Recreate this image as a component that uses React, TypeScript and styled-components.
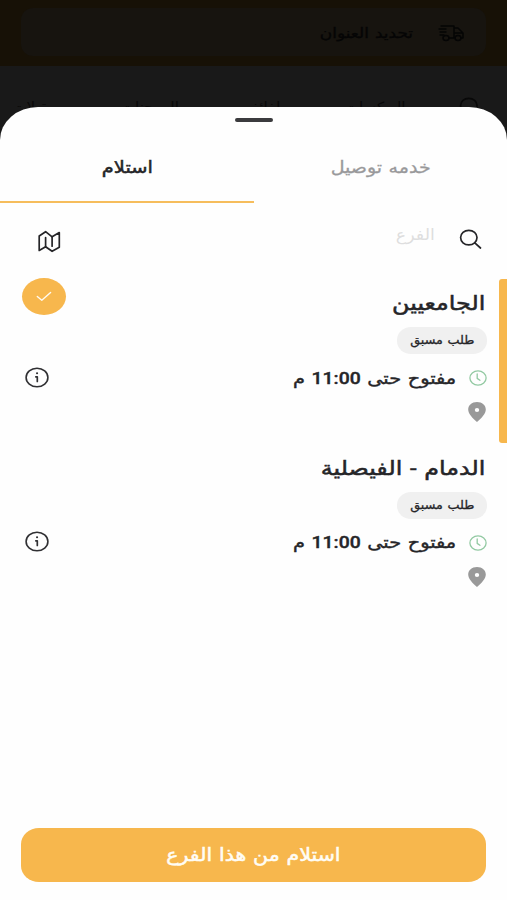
import React from "react";
import styled, { createGlobalStyle } from "styled-components";

const GlobalStyle = createGlobalStyle`
  * { box-sizing: border-box; }
  body { margin: 0; background: #191919; }
`;

const Page = styled.main`
  width: 507px;
  height: 900px;
  display: flex;
  flex-direction: column;
  direction: rtl;
  overflow: hidden;
  background: #191919;
  color: #252528;
  font-family: Roboto, "DejaVu Sans", sans-serif;
`;

const Label = styled.span<{
  $size: number;
  $stretch?: number;
  $origin?: string;
  $weight?: number;
  $stroke?: number;
  $color?: string;
}>`
  display: inline-block;
  white-space: nowrap;
  line-height: 1.2;
  font-size: ${(p) => p.$size}px;
  font-weight: ${(p) => p.$weight ?? 400};
  color: ${(p) => p.$color ?? "inherit"};
  word-spacing: 1.5px;
  -webkit-text-stroke: ${(p) => p.$stroke ?? 0}px currentColor;
  transform: scaleX(${(p) => p.$stretch ?? 1});
  transform-origin: ${(p) => p.$origin ?? "right"} center;
`;

const Header = styled.header`
  flex: none;
  height: 66px;
  padding: 8px 21px 10px;
  background: #171106;
`;

const AddressBar = styled.div`
  height: 48px;
  padding: 2px 21px 0;
  display: flex;
  align-items: center;
  gap: 25px;
  border-radius: 12px;
  background: #17140f;
  color: #050505;
`;

const Categories = styled.nav`
  flex: none;
  height: 41px;
  padding: 31px 25px 0 14px;
  display: flex;
  align-items: flex-start;
  justify-content: space-between;
  overflow: hidden;
  color: #080808;
`;

const CategoryList = styled.div`
  width: 389px;
  padding-top: 2px;
  display: flex;
  justify-content: space-between;
`;

const Sheet = styled.section`
  flex: none;
  height: 793px;
  display: flex;
  flex-direction: column;
  border-radius: 38px 38px 0 0 / 33px 33px 0 0;
  background: #fefefe;
`;

const Handle = styled.div`
  flex: none;
  width: 38px;
  height: 4px;
  margin: 11px auto 0;
  border-radius: 2px;
  background: #3b3b3e;
`;

const Tabs = styled.div`
  flex: none;
  height: 81px;
  display: grid;
  grid-template-columns: 253px 254px;
`;

const Tab = styled.button<{ $active?: boolean }>`
  display: flex;
  align-items: flex-start;
  justify-content: center;
  padding: 35px 0 0;
  border: 0;
  border-bottom: 2px solid ${(p) => (p.$active ? "#f6bd5c" : "transparent")};
  background: none;
  font-family: inherit;
  color: ${(p) => (p.$active ? "#252528" : "#99999b")};
`;

const SearchRow = styled.div`
  flex: none;
  height: 76px;
  padding: 26px 25px 0 37px;
  display: flex;
  align-items: flex-start;
`;

const SearchText = styled.div`
  flex: 1;
  padding-right: 24px;
  margin-top: -4px;
`;

const Branches = styled.div`
  flex: 1;
  display: flex;
  align-items: flex-start;
`;

const ScrollThumb = styled.div`
  width: 8px;
  height: 164px;
  border-radius: 3px 0 0 3px;
  background: #f7b74d;
`;

const BranchList = styled.div`
  flex: 1;
`;

const Branch = styled.article`
  height: 164.5px;
  padding: 0 12px 0 22px;
  display: flex;
  justify-content: space-between;
`;

const Info = styled.div`
  display: flex;
  flex-direction: column;
  align-items: flex-start;
`;

const TitleBox = styled.div`
  height: 48px;
  padding: 12px 2px 0 0;
`;

const Tag = styled.div`
  width: 90px;
  height: 27px;
  display: flex;
  align-items: center;
  justify-content: center;
  border-radius: 14px / 13px;
  background: #f0f0f0;
`;

const Hours = styled.div`
  height: 48px;
  display: flex;
  align-items: center;
  gap: 13px;
`;

const Actions = styled.div`
  width: 44px;
  display: flex;
  flex-direction: column;
`;

const Selected = styled.div<{ $on: boolean }>`
  height: 37px;
  margin-top: -1px;
  display: grid;
  place-items: center;
  border-radius: 50%;
  background: ${(p) => (p.$on ? "#f7b74d" : "transparent")};
`;

const InfoButton = styled.button`
  align-self: flex-end;
  display: grid;
  place-items: center;
  width: 30px;
  height: 24px;
  margin-top: 50px;
  padding: 0;
  border: 0;
  background: none;
  color: #303033;
`;

const Confirm = styled.button`
  flex: none;
  height: 54px;
  margin: 0 21px 18px;
  display: flex;
  align-items: center;
  justify-content: center;
  border: 0;
  border-radius: 18px / 16px;
  background: #f7b74d;
  color: #fffdf5;
  font-family: inherit;
`;

const Svg = styled.svg<{ $stroke?: string }>`
  display: block;
  flex: none;
  fill: none;
  stroke: ${(p) => p.$stroke ?? "currentColor"};
  stroke-linecap: round;
  stroke-linejoin: round;
`;

const SearchIcon = () => (
  <Svg width="23" height="21" viewBox="0 0 23 21" strokeWidth="1.7">
    <ellipse cx="9.8" cy="8.6" rx="8.2" ry="7.3" />
    <path d="M15.8 13.8 21.5 19" />
  </Svg>
);

const MapIcon = () => (
  <Svg width="24" height="24" viewBox="0 -1 24 24" strokeWidth="1.7">
    <path d="M2.2 6v14.4l6.4-3.6 6.5 4.5 7.2-4V2.5l-7.2 4.300L8.600 1.700Z" />
    <path d="M8.600 7.500v9.300M15.100 6.800v9.400" />
  </Svg>
);

const TruckIcon = () => (
  <Svg width="27" height="18" viewBox="0 0 27 18" strokeWidth="1.5">
    <path d="M3 2h13v12H11M16 4h4l5 5v5h-2M16 9h9M1 5h7M2 8h6M2 11h4" />
    <ellipse cx="8" cy="14" rx="3" ry="2.5" />
    <ellipse cx="20" cy="14" rx="3" ry="2.5" />
  </Svg>
);

const CheckIcon = () => (
  <Svg width="16" height="11" viewBox="0 0 16 11" $stroke="#fffaf0" strokeWidth="1.4">
    <path d="m1.3 5.5 4.500 3.800 8.800-7.800" />
  </Svg>
);

const ClockIcon = () => (
  <Svg width="18" height="16" viewBox="0 0 18 16" $stroke="#92c9a2" strokeWidth="1.3">
    <ellipse cx="9" cy="8" rx="8.1" ry="7.1" />
    <path d="M8.200 4v4.400l2.700 1.900" />
  </Svg>
);

const PinShape = styled.path`
  fill: #999;
  fill-rule: evenodd;
`;

const PinIcon = () => (
  <Svg width="19" height="20" viewBox="0 0 19 20" $stroke="none">
    <PinShape d="M9 0C3.800 0 .2 3.300.2 7.600.2 11.800 4.400 16.200 9 20c4.600-3.800 8.800-8.200 8.800-12.400C17.800 3.300 14.200 0 9 0Zm0 6a2.200 2 0 1 1 0 4 2.200 2 0 0 1 0-4Z" />
  </Svg>
);

const InfoIcon = () => (
  <Svg width="24" height="21" viewBox="0 0 24 21" strokeWidth="1.6">
    <ellipse cx="12" cy="10.500" rx="10.900" ry="9.300" />
    <path d="M10.800 9.800h1.500v4.700" strokeWidth="1.7" />
    <path d="M12 6.200h.1" strokeWidth="2" />
  </Svg>
);

const branches = [
  { name: "الجامعيين", selected: true },
  { name: "الدمام - الفيصلية", selected: false },
];

const categories = ["البوكسات", "لفائف", "المعجنات", "مقبلات"];

export default function App() {
  return (
    <Page>
      <GlobalStyle />
      <Header>
        <AddressBar>
          <TruckIcon />
          <Label $size={14} $stretch={1.21} $stroke={0.3}>تحديد العنوان</Label>
        </AddressBar>
      </Header>
      <Categories>
        <SearchIcon />
        <CategoryList>
          {categories.map((name) => (
            <Label key={name} $size={14} $stretch={1.08} $origin="center">{name}</Label>
          ))}
        </CategoryList>
      </Categories>
      <Sheet>
        <Handle />
        <Tabs>
          <Tab>
            <Label $size={17} $stretch={1.12} $origin="center" $stroke={0.3}>خدمه توصيل</Label>
          </Tab>
          <Tab $active>
            <Label $size={17} $stretch={1.14} $origin="center" $stroke={0.5}>استلام</Label>
          </Tab>
        </Tabs>
        <SearchRow>
          <SearchIcon />
          <SearchText>
            <Label $size={16} $stretch={1.09} $color="#dededf">الفرع</Label>
          </SearchText>
          <MapIcon />
        </SearchRow>
        <Branches>
          <ScrollThumb />
          <BranchList>
            {branches.map((branch) => (
              <Branch key={branch.name}>
                <Info>
                  <TitleBox>
                    <Label $size={20} $stretch={1.19} $stroke={0.5}>{branch.name}</Label>
                  </TitleBox>
                  <Tag>
                    <Label $size={12} $stretch={1.06} $origin="center" $stroke={0.3}>طلب مسبق</Label>
                  </Tag>
                  <Hours>
                    <ClockIcon />
                    <Label $size={17} $stretch={1.14} $weight={500} $stroke={0.4}>مفتوح حتى 11:00 م</Label>
                  </Hours>
                  <PinIcon />
                </Info>
                <Actions>
                  <Selected $on={branch.selected}>
                    {branch.selected && <CheckIcon />}
                  </Selected>
                  <InfoButton aria-label="معلومات الفرع">
                    <InfoIcon />
                  </InfoButton>
                </Actions>
              </Branch>
            ))}
          </BranchList>
        </Branches>
        <Confirm>
          <Label $size={18} $stretch={1.14} $origin="center" $stroke={0.5}>استلام من هذا الفرع</Label>
        </Confirm>
      </Sheet>
    </Page>
  );
}
